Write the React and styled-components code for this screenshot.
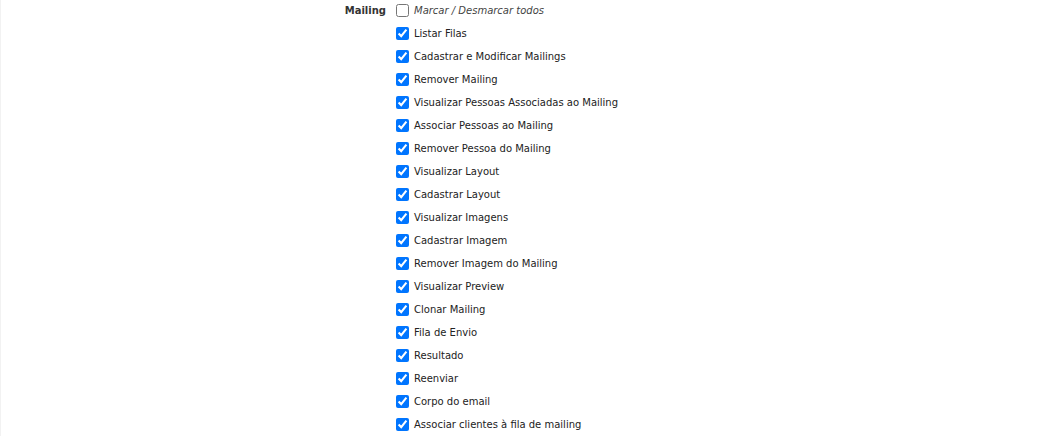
import { useState } from "react";
import styled, { createGlobalStyle } from "styled-components";

const GlobalStyle = createGlobalStyle`
	html, body {
		margin: 0;
		padding: 0;
		background: #fff;
	}
	body {
		font-family: "DejaVu Sans", Verdana, sans-serif;
		font-size: 10px;
		color: #222;
	}
`;

const Page = styled.div`
	min-height: 436px;
	border-left: 1px solid #f2f2f2;
	box-sizing: border-box;
`;

const FieldRow = styled.div`
	display: grid;
	grid-template-columns: 385px 1fr;
	column-gap: 6px;
	align-items: start;
`;

const FieldLabel = styled.div`
	text-align: right;
	font-weight: bold;
	color: #333;
	height: 23px;
	line-height: 21px;
`;

const OptionList = styled.div`
	display: flex;
	flex-direction: column;
`;

const Option = styled.label`
	display: flex;
	align-items: center;
	box-sizing: border-box;
	height: 23px;
	padding-bottom: 2px;
	color: ${(p) => (p.$all ? "#444" : "#222")};
	font-style: ${(p) => (p.$all ? "italic" : "normal")};
	white-space: nowrap;

	& input {
		width: 13px;
		height: 13px;
		margin: 0 5px 0 4px;
		accent-color: #0075ff;
	}
`;

const permissions = [
	"Listar Filas",
	"Cadastrar e Modificar Mailings",
	"Remover Mailing",
	"Visualizar Pessoas Associadas ao Mailing",
	"Associar Pessoas ao Mailing",
	"Remover Pessoa do Mailing",
	"Visualizar Layout",
	"Cadastrar Layout",
	"Visualizar Imagens",
	"Cadastrar Imagem",
	"Remover Imagem do Mailing",
	"Visualizar Preview",
	"Clonar Mailing",
	"Fila de Envio",
	"Resultado",
	"Reenviar",
	"Corpo do email",
	"Associar clientes à fila de mailing",
];

const App = () => {
	const [checked, setChecked] = useState(permissions.map(() => true));
	const [all, setAll] = useState(false);

	const toggle = (i) => {
		setChecked((prev) => prev.map((v, j) => (j === i ? !v : v)));
	};

	const toggleAll = () => {
		const next = !all;
		setAll(next);
		setChecked(permissions.map(() => next));
	};

	return (
		<Page>
			<GlobalStyle />
			<FieldRow>
				<FieldLabel>Mailing</FieldLabel>
				<OptionList>
					<Option $all>
						<input type="checkbox" checked={all} onChange={toggleAll} />
						Marcar / Desmarcar todos
					</Option>
					{permissions.map((name, i) => (
						<Option key={name}>
							<input
								type="checkbox"
								checked={checked[i]}
								onChange={() => toggle(i)}
							/>
							{name}
						</Option>
					))}
				</OptionList>
			</FieldRow>
		</Page>
	);
};

export default App;
